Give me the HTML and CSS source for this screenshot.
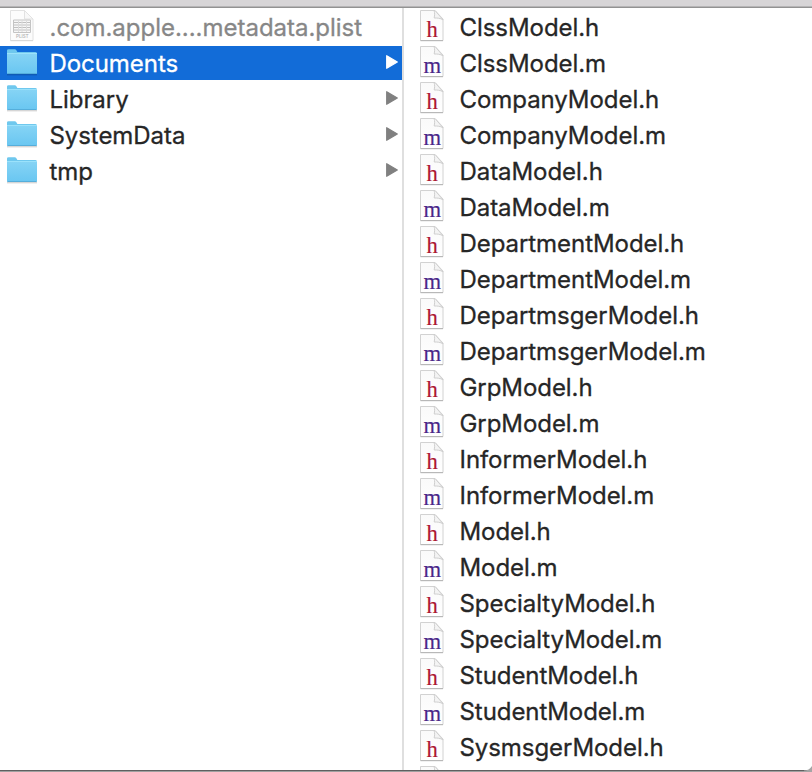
FILE: index.html
```
<!DOCTYPE html>
<html lang="en">
<head>
<meta charset="utf-8">
<title>Finder</title>
<link rel="stylesheet" href="styles.css">
</head>
<body>
<svg class="defs" width="0" height="0">
  <defs>
    <linearGradient id="blue" x1="0" y1="0" x2="0" y2="1"><stop offset="0" stop-color="#86d4f5"/><stop offset="1" stop-color="#69c6f1"/></linearGradient>
    <linearGradient id="paper" x1="0" y1="0" x2="0" y2="1"><stop offset="0" stop-color="#fafafa"/><stop offset="1" stop-color="#fff"/></linearGradient>
    <symbol id="folder" viewBox="0 0 32 28">
      <path d="M1 25h30v1.400H1z" fill="#000" opacity=".16"/>
      <path d="M1 24V1.500Q1 .200 2.500.200h6.200q1 0 1.500.8l1.200 2H29.500q1.500 0 1.500 1.500V24z" fill="#6fc8ee"/>
      <path d="M1 4.200h30V24q0 1-1 1H2q-1 0-1-1z" fill="url(#blue)"/>
      <path d="M1 4.500h30" stroke="#9be2fb" stroke-width="1"/>
      <path d="M1.500 24.500h29" stroke="#55aedb" stroke-width="1"/>
    </symbol>
    <symbol id="page" viewBox="0 1 26 34">
      <path d="M1.500 1.500h14.500l8 8.500v21.500h-22.500z" fill="url(#paper)" stroke="#d2d2d2" stroke-linejoin="round"/>
      <path d="M1.500 31.700h22.500" stroke="#b2b2b2" stroke-width="1"/>
      <path d="M15 1.500c1 2.500.6 5 .2 7.500 3 0 6 0 8.800 1.800L16 1.500z" fill="#f4f4f4" stroke="#cfcfcf" stroke-linejoin="round"/>
    </symbol>
    <symbol id="h" viewBox="0 0 26 34"><use href="#page" width="26" height="34"/><text class="letter red" x="7.400" y="26.500" textLength="11.300" lengthAdjust="spacingAndGlyphs">h</text></symbol>
    <symbol id="m" viewBox="0 0 26 34"><use href="#page" width="26" height="34"/><text class="letter violet" x="4.400" y="26.500" textLength="17.600" lengthAdjust="spacingAndGlyphs">m</text></symbol>
    <symbol id="plist" viewBox="0 1 26 34">
      <path d="M1.500 1.500h14l8.500 8.500v21.500h-22.500z" fill="#fcfcfc" stroke="#e2e2e2" stroke-linejoin="round"/>
      <path d="M1.500 31.700h22.500" stroke="#d6d6d6"/>
      <path d="M15.500 1.500v8.500h8.500z" fill="#f8f8f8" stroke="#e2e2e2"/>
      <path d="M4.500 11h17v12.500h-17z" fill="#f7f7f7" stroke="#c4c4c4"/>
      <path d="M5 13.500h16M5 16h16M5 18.500h16M5 21h16" stroke="#c0c0c0"/>
      <path d="M9.500 11v12M13 11v12M17.500 11v12" stroke="#dcdcdc"/>
      <text class="tag" x="7" y="29.300" textLength="12.300" lengthAdjust="spacingAndGlyphs">PLIST</text>
    </symbol>
    <symbol id="arrow" viewBox="0 0 12 14"><path d="M.7.700 11.300 7 .7 13.300z" fill="currentColor" stroke="currentColor" stroke-width="1.200" stroke-linejoin="round"/></symbol>
  </defs>
</svg>
<div class="window">
  <div class="toolbar"></div>
  <main class="columns">
    <ul class="column folders">
      <li class="row dim"><svg class="icon plist"><use href="#plist"/></svg><span class="name">.com.apple....metadata.plist</span></li>
      <li class="row selected"><svg class="icon folder"><use href="#folder"/></svg><span class="name">Documents</span><svg class="arrow"><use href="#arrow"/></svg></li>
      <li class="row"><svg class="icon folder"><use href="#folder"/></svg><span class="name">Library</span><svg class="arrow"><use href="#arrow"/></svg></li>
      <li class="row"><svg class="icon folder"><use href="#folder"/></svg><span class="name">SystemData</span><svg class="arrow"><use href="#arrow"/></svg></li>
      <li class="row"><svg class="icon folder"><use href="#folder"/></svg><span class="name">tmp</span><svg class="arrow"><use href="#arrow"/></svg></li>
    </ul>
    <ul class="column files">
      <li class="row"><svg class="icon file"><use href="#h"/></svg><span class="name">ClssModel.h</span></li>
      <li class="row"><svg class="icon file"><use href="#m"/></svg><span class="name">ClssModel.m</span></li>
      <li class="row"><svg class="icon file"><use href="#h"/></svg><span class="name">CompanyModel.h</span></li>
      <li class="row"><svg class="icon file"><use href="#m"/></svg><span class="name">CompanyModel.m</span></li>
      <li class="row"><svg class="icon file"><use href="#h"/></svg><span class="name">DataModel.h</span></li>
      <li class="row"><svg class="icon file"><use href="#m"/></svg><span class="name">DataModel.m</span></li>
      <li class="row"><svg class="icon file"><use href="#h"/></svg><span class="name">DepartmentModel.h</span></li>
      <li class="row"><svg class="icon file"><use href="#m"/></svg><span class="name">DepartmentModel.m</span></li>
      <li class="row"><svg class="icon file"><use href="#h"/></svg><span class="name">DepartmsgerModel.h</span></li>
      <li class="row"><svg class="icon file"><use href="#m"/></svg><span class="name">DepartmsgerModel.m</span></li>
      <li class="row"><svg class="icon file"><use href="#h"/></svg><span class="name">GrpModel.h</span></li>
      <li class="row"><svg class="icon file"><use href="#m"/></svg><span class="name">GrpModel.m</span></li>
      <li class="row"><svg class="icon file"><use href="#h"/></svg><span class="name">InformerModel.h</span></li>
      <li class="row"><svg class="icon file"><use href="#m"/></svg><span class="name">InformerModel.m</span></li>
      <li class="row"><svg class="icon file"><use href="#h"/></svg><span class="name">Model.h</span></li>
      <li class="row"><svg class="icon file"><use href="#m"/></svg><span class="name">Model.m</span></li>
      <li class="row"><svg class="icon file"><use href="#h"/></svg><span class="name">SpecialtyModel.h</span></li>
      <li class="row"><svg class="icon file"><use href="#m"/></svg><span class="name">SpecialtyModel.m</span></li>
      <li class="row"><svg class="icon file"><use href="#h"/></svg><span class="name">StudentModel.h</span></li>
      <li class="row"><svg class="icon file"><use href="#m"/></svg><span class="name">StudentModel.m</span></li>
      <li class="row"><svg class="icon file"><use href="#h"/></svg><span class="name">SysmsgerModel.h</span></li>
      <li class="row"><svg class="icon file"><use href="#page"/></svg></li>
    </ul>
  </main>
  <svg class="corner" viewBox="0 0 8 6"><path d="M0 4.500Q5 4.500 8 0V6H0z" fill="#a5a5a5"/></svg>
</div>
</body>
</html>
```
FILE: styles.css
```
* { box-sizing: border-box; }
body { margin: 0; background: #fff; font-family: Inter, sans-serif; overflow: hidden; }
.defs { position: absolute; }
.window {
  position: relative;
  display: flex;
  flex-direction: column;
  height: 772px;
  border-bottom: 1px solid #a0a0a0;
}
.toolbar { flex: none; height: 8px; background: #d7d5d7; border-bottom: 1px solid #929292; box-shadow: inset 0 -1px #b5b4b5; }
.columns { flex: 1; display: flex; min-height: 0; border-bottom: 1px solid #606060; }
.column { margin: 0; padding: 1px 0 0; list-style: none; overflow: hidden; }
.folders { width: 404px; border-right: 2px solid #dfdfdf; }
.files { flex: 1; }
.row {
  display: flex;
  align-items: center;
  height: 36px;
  border: solid transparent;
  border-width: 1px 0;
  background-clip: padding-box;
  color: #262626;
}
.name {
  margin: 2px 0 0 -0.5px;
  font-size: 24px;
  line-height: 34px;
  letter-spacing: -0.06px;
  white-space: nowrap;
  -webkit-text-stroke: 0.3px currentColor;
}
.dim { color: #878787; }
.dim .name { letter-spacing: -0.02px; }
.selected { background-color: #126cd8; color: #fff; }
.icon { flex: none; display: block; }
.folder { width: 32px; height: 28px; margin: 0 12px 0 6px; }
.plist { width: 26px; height: 34px; margin: 0 15px 0 9px; }
.file { width: 26px; height: 34px; margin: 0 15px; }
.arrow { width: 12px; height: 14px; margin: 0 4px 2px auto; color: #808080; }
.selected .arrow { color: #fff; }
.letter { font: 24px "Liberation Serif", serif; stroke-width: .2px; }
.red { fill: #ac1732; stroke: #ac1732; }
.violet { fill: #4a2789; stroke: #4a2789; }
.tag { font: bold 5px "Liberation Sans", sans-serif; fill: #bdbdbd; }
.corner { position: absolute; right: 0; bottom: -1px; width: 8px; height: 6px; }
```
